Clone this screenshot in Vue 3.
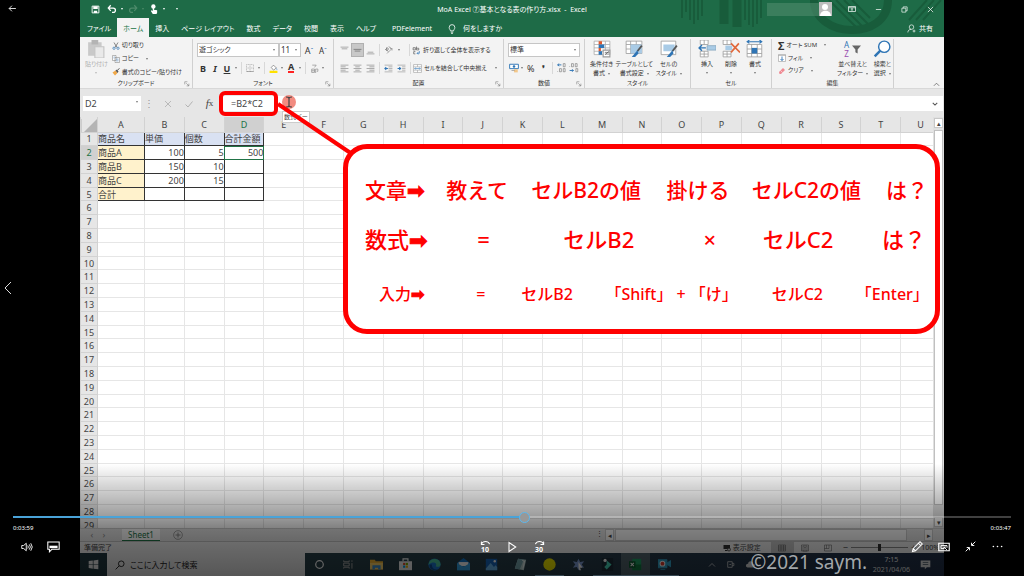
<script setup>
import { ref, h } from 'vue'

const glyphs = {
  save: '<path d="M2 2h12v12H2z" fill="none" stroke="#fff" stroke-width="1.6"/><path d="M4 2h8v5H4zM5 10h6v4H5z" fill="#fff"/>',
  undo: '<path d="M6 2 2 6.500l4 4.500M2.500 6.500H10a3.500 3.500 0 0 1 0 7H8" fill="none" stroke="#fff" stroke-width="2"/>',
  redo: '<path d="m10 2 4 4.500-4 4.500M13.500 6.500H6a3.500 3.500 0 0 0 0 7h2" fill="none" stroke="#4d8a6a" stroke-width="2"/>',
  touch: '<circle cx="7" cy="4" r="3.500" fill="#fff"/><path d="M6 3h2v6l5 1v4l-1 2H6L3 11l1-1 2 1z" fill="#fff"/>',
  ribbonOpt: '<path d="M1 3h14v10H1zM1 5.500h14" fill="none" stroke="#fff" stroke-width="1.400"/><path d="M8 12V7M5.800 9 8 7l2.200 2" fill="none" stroke="#fff" stroke-width="1.300"/>',
  min: '<path d="M2 8h12" stroke="#fff" stroke-width="1.600"/>',
  restore: '<path d="M2 5h9v9H2zM5 5V2h9v9h-3" fill="none" stroke="#fff" stroke-width="1.500"/>',
  close: '<path d="m2 2 12 12M14 2 2 14" stroke="#fff" stroke-width="1.600"/>',
  bulb: '<path d="M5.500 11C5.500 9 3.500 8.500 3.500 5.500a4.500 4.500 0 0 1 9 0c0 3-2 3.500-2 5.500zM6 13h4M6.500 15h3" fill="none" stroke="#fff" stroke-width="1.300"/>',
  share: '<circle cx="8" cy="5.500" r="4" fill="none" stroke="#fff" stroke-width="1.200"/><path d="M1.500 15c0-4 3-5.500 6-5.500M10 12.500h5M12.500 10v5" fill="none" stroke="#fff" stroke-width="1.200"/>',
  paste: '<path d="M1 2h12v12H1z" fill="#c9c9c9"/><path d="M4 0h6v4H4z" fill="#b4b4b4"/><path d="M7 6h8v10H7z" fill="#e9e9e9" stroke="#c4c4c4"/>',
  cut: '<path d="m4 1 6 10M12 1 6 11" stroke="#555" stroke-width="1.400"/><circle cx="4" cy="12.500" r="2.300" fill="none" stroke="#3b7cb8" stroke-width="1.500"/><circle cx="12" cy="12.500" r="2.300" fill="none" stroke="#3b7cb8" stroke-width="1.500"/>',
  copy: '<path d="M1 1h7v10H1zM6 5h9v10H6z" fill="#fff" stroke="#777"/><path d="M8 8h5M8 10h5M8 12h5M3 4h3M3 6h2" stroke="#5b8ab8"/>',
  brush: '<path d="m1 9 6-4 4 5-5 5z" fill="#f0a848"/><path d="m7 5 3-2 3 4-2 3z" fill="#555"/><path d="m11 4 4-3" stroke="#555" stroke-width="2"/>',
  borders: '<path d="M1 1h14v14H1zM8 1v14M1 8h14" fill="none" stroke="#999" stroke-dasharray="2 1"/><path d="M1 15h14" stroke="#777"/>',
  fill: '<path d="m4 6 4-4 5 5-5 4z" fill="#fff" stroke="#555"/><path d="M13 7c2 1 2 3 1 4z" fill="#3b7cb8"/><path d="M1 12h14v4H1z" fill="#ffe100"/>',
  ruby: '<path d="M4 2h7L8 6M3 9h5v6H3zM3 12h5M10 9h4v4h-2M10 9v7" fill="none" stroke="#888" stroke-width="1.200"/>',
  top: '<path d="M1 2h14M3 5h10" stroke="#888" stroke-width="1.200"/>',
  middle: '<path d="M1 6h14M3 9h10" stroke="#666" stroke-width="1.200"/>',
  bottom: '<path d="M3 11h10M1 14h14" stroke="#888" stroke-width="1.200"/>',
  left: '<path d="M1 2h14M1 5h9M1 8h14M1 11h9M1 14h14" stroke="#888" stroke-width="1.200"/>',
  center: '<path d="M1 2h14M4 5h8M1 8h14M4 11h8M1 14h14" stroke="#888" stroke-width="1.200"/>',
  right: '<path d="M1 2h14M6 5h9M1 8h14M6 11h9M1 14h14" stroke="#888" stroke-width="1.200"/>',
  orient: '<path d="M4 15 14 5M10 5h4v4" fill="none" stroke="#888" stroke-width="1.400"/><path d="m1 6 5 5M4 3l3 3-3 3-2-2zM8 1l3 3" fill="none" stroke="#555" stroke-width="1.400"/>',
  outdent: '<path d="M1 2h14M8 5h7M8 8h7M8 11h7M1 14h14" stroke="#999" stroke-width="1.200"/><path d="M7 8H2M4 5.500 1.500 8 4 10.500" stroke="#2f75b5" fill="none" stroke-width="1.800"/>',
  indent: '<path d="M1 2h14M9 5h6M9 8h6M9 11h6M1 14h14" stroke="#999" stroke-width="1.200"/><path d="M1 8h5M4 5.500 6.500 8 4 10.500" stroke="#2f75b5" fill="none" stroke-width="1.800"/>',
  wrap: '<path d="M2 3h4v4H2zM8 1v6h4V4H8M6 10H3v4h3" fill="none" stroke="#555" stroke-width="1.200"/><path d="M13 9v4H9m2-2-2 2 2 2" fill="none" stroke="#2f75b5" stroke-width="1.300"/>',
  merge: '<path d="M1 1h14v14H1zM1 5h14M1 11h14M8 1v4M8 11v4" fill="#fff" stroke="#999"/><path d="M3 8h10M5 6 3 8l2 2M11 6l2 2-2 2" fill="none" stroke="#2f75b5"/>',
  money: '<path d="M1 2h14v7H1z" fill="#fff" stroke="#2f75b5" stroke-width="1.500"/><circle cx="8" cy="5.500" r="2" fill="#2f75b5"/><path d="M8 10h6v5H8z" fill="#f3c78a"/><path d="M4 12h5" stroke="#888"/>',
  dec1: '<path d="M7 3H1M3.500 1 1 3l2.500 2" fill="none" stroke="#2f75b5" stroke-width="1.500"/><path d="M10 1h3v5h-3zM4 9h3v5H4zM10 9h3v5h-3zM1 13v1" fill="none" stroke="#777"/>',
  dec2: '<path d="M4 1h3v5H4zM10 1h3v5h-3zM11 9h3v5h-3zM1 5v1" fill="none" stroke="#777"/><path d="M1 12h6M5 10l2 2-2 2" fill="none" stroke="#2f75b5" stroke-width="1.500"/>',
  cond: '<path d="M1 1h14v12H1zM6 1v12M11 1v12M1 4h14M1 7h14M1 10h14" fill="#fff" stroke="#aaa" stroke-width=".7"/><path d="M5 1h3v3H5zM5 7h2v3H5z" fill="#e0582c"/><path d="M5 4h5v3H5zM5 10h3v3H5z" fill="#2f75b5"/><path d="M9 9h6v6H9z" fill="#fff" stroke="#999"/><path d="m11 13 3-3M10.500 11h4M10.500 12.500h4" stroke="#555" stroke-width=".6"/>',
  tableFmt: '<path d="M1 1h14v11H1zM1 4h14M1 8h14M5 1v11M10 1v11" fill="#fff" stroke="#999" stroke-width=".7"/><path d="M5 4h10v8H5z" fill="#a9cbe6"/><path d="m15 5-4 5" stroke="#555" stroke-width="1.600"/><path d="m11 9 1 3-3 3H6z" fill="#2f75b5"/>',
  cellFmt: '<path d="M1 1h13v12H1z" fill="#fff" stroke="#999" stroke-width=".7"/><path d="M3 4h10v6H3z" fill="#a9cbe6"/><path d="m15 5-4 5" stroke="#555" stroke-width="1.600"/><path d="m11 9 1 3-3 3H6z" fill="#2f75b5"/>',
  ins: '<path d="M2 0h7v4H2zM2 10h7v5H2zM5.500 0v4M5.500 10v5M2 12.500h7" fill="#fff" stroke="#999" stroke-width=".7"/><path d="M8 5h8v4H8z" fill="#a9cbe6" stroke="#7f9fb8" stroke-width=".6"/><path d="M7 7H1M3.500 4.500 1 7l2.500 2.500" fill="none" stroke="#2f75b5" stroke-width="1.300"/>',
  del: '<path d="M1 0h7v4H1zM1 10h7v5H1zM4.500 0v4M4.500 10v5M1 12.500h7" fill="#fff" stroke="#999" stroke-width=".7"/><path d="M3 5h6v4H3z" fill="#a9cbe6"/><path d="m8 3 8 8M15 3l-7 8" stroke="#e0693c" stroke-width="1.500"/>',
  fmt: '<path d="M1 4h13v11H1zM5 4v11M10 4v11M1 8h13M1 12h13" fill="#fff" stroke="#999" stroke-width=".7"/><path d="M5 7h5v5H5z" fill="#2f75b5"/><path d="M1 1.500h13M3 0 1 1.500 3 3M12 0l2 1.500L12 3" fill="none" stroke="#2f75b5"/>',
  fillDown: '<path d="M1 1h14v14H1z" fill="#fff" stroke="#888"/><path d="M1 3h14" stroke="#888"/><path d="M8 5v8M5 10l3 3 3-3" fill="none" stroke="#2f75b5" stroke-width="1.800"/>',
  eraser: '<path d="m2 10 8-8 4 4-8 8H3z" fill="#ef8a93"/><path d="m5 7 4 4" stroke="#fff"/>',
  funnel: '<path d="M0 1h16L10 8v7l-4-2V8z" fill="#666"/>',
  find: '<circle cx="10" cy="6" r="5" fill="#fff" stroke="#2f75b5" stroke-width="1.300"/><path d="m6.500 9.500-5 5" stroke="#2f75b5" stroke-width="2.200"/>',
  launch: '<path d="M2 9V2h7" fill="none" stroke="#777" stroke-width="1.500"/><path d="m6 6 7 7M13 7v6H7" fill="none" stroke="#777" stroke-width="1.500"/>',
  up: '<path d="m2 11 6-6 6 6" fill="none" stroke="#555" stroke-width="1.600"/>',
  down: '<path d="m2 5 6 6 6-6" fill="none" stroke="#555" stroke-width="2.800"/>',
  cancel: '<path d="m2 2 12 12M14 2 2 14" stroke="#b3b3b3" stroke-width="1.800"/>',
  check: '<path d="m1 9 5 5L15 3" fill="none" stroke="#b3b3b3" stroke-width="2"/>',
  plus: '<circle cx="8" cy="8" r="7" fill="none" stroke="#777"/><path d="M8 4v8M4 8h8" stroke="#777" stroke-width="1.300"/>',
  display: '<path d="M1 2h13v8H1z" fill="#333"/><path d="M4 13h5" stroke="#333" stroke-width="2"/><circle cx="12" cy="11" r="3" fill="#ddd" stroke="#333" stroke-width="1.500"/>',
  grid: '<path d="M1 2h14v12H1zM1 6h14M1 10h14M6 2v12M11 2v12" fill="none" stroke="#555"/>',
  page: '<path d="M1 2h14v12H1zM4 4h8v10H4zM6 7h4M6 10h4" fill="none" stroke="#555"/>',
  breaks: '<path d="M1 2h14v12H1zM1 9h9V2M5 2v7" fill="none" stroke="#555"/>',
  win: '<path d="M1 3 7 2v5.500H1zM8 2l7-1v6.500H8zM1 8.500h6V14l-6-1zM8 8.500h7V15l-7-1z" fill="#eee"/>',
  search: '<circle cx="10" cy="6" r="4.500" fill="none" stroke="#222" stroke-width="1.500"/><path d="m7 9-6 6" stroke="#222" stroke-width="1.500"/>',
  cortana: '<circle cx="8" cy="8" r="5.500" fill="none" stroke="#fff" stroke-width="1.800"/>',
  tasks: '<path d="M1 2v2h8V2M1 6h8v4H1zM1 14v-2h8v2M13 2v2M13 6v8" fill="none" stroke="#aaa" stroke-width="1.400"/>',
  folder: '<path d="M0 2h6l1 2h9v10H0z" fill="#f2b632"/><path d="M0 6h16v8H0z" fill="#ffd66b"/><path d="M3 9h10v5h-3v-2H6v2H3z" fill="#3b92d4"/>',
  store: '<path d="M0 4h16v11H0z" fill="#f4f4f4"/><path d="M5 4V1h6v3" fill="none" stroke="#f4f4f4" stroke-width="1.500"/><path d="M5 6h2.700v2.700H5z" fill="#e8502c"/><path d="M8.300 6H11v2.700H8.300z" fill="#7fba00"/><path d="M5 9.300h2.700V12H5z" fill="#00a4ef"/><path d="M8.300 9.300H11V12H8.300z" fill="#ffb900"/>',
  edge: '<circle cx="8" cy="8" r="7.500" fill="#1c78d0"/><path d="M1 6a7.500 7.500 0 0 1 14.500 2c0 3-4 3.500-6 2 2-3-1-5-4-4.500C3 6 1 8 .600 9z" fill="#4cc8a0"/><path d="M5 8c-1 4 3 7 7 6-6 3-11-1-10-6z" fill="#0c4a90"/>',
  mail: '<path d="M0 6 8 0l8 6v9H0z" fill="#1276c8"/><path d="M2 5h12v5H2z" fill="#fff"/><path d="m0 6 8 5 8-5v9H0z" fill="#35a6e8"/>',
  photos: '<path d="M1 1h14v14H1z" fill="#1766bd"/><path d="m1 13 6-7 4 5 2-2 2 2v4H1z" fill="#6ab8f0"/><circle cx="12" cy="4" r="1.500" fill="#fff"/>',
  notes: '<path d="m5 1 10 1-3 13-11-2z" fill="#b9d4d2"/><path d="m5 1 7 1-5 12-6-1z" fill="#77a7b0"/><path d="m10 3 3 1-2 9" fill="none" stroke="#fff"/>',
  yellow: '<circle cx="8" cy="8" r="7.600" fill="#f2ea00"/>',
  star: '<path d="m8 1 2 4 5-1-3 4 3 4-5-1-2 4-2-4-5 1 3-4-3-4 5 1z" fill="#7f9ed8"/><path d="m8 5 5 7-3 0 1 3-2 0-1-3z" fill="#fff"/>',
  filmora: '<path d="M1 0h14v16H1z" fill="#1c2c38"/><path d="m7 3 6 5-6 6-3-3 3-3z" fill="#4adcc0"/><circle cx="5" cy="3" r="2" fill="#fff"/>',
  excel: '<path d="M4 1h11v14H4z" fill="#21a366"/><path d="M9 8h6v7H4V8z" fill="#107c41"/><path d="M0 4h8v8H0z" fill="#0b5c30"/><path d="m2 6 4 4M6 6l-4 4" stroke="#fff" stroke-width="1.300"/>',
  recorder: '<path d="M0 2h11v10H0zM11 6l5-3v8l-5-3zM3 14h6" fill="#35a7cf" stroke="#35a7cf"/><circle cx="5.500" cy="7" r="3.500" fill="#fff"/><circle cx="5.500" cy="7" r="2.300" fill="#e23b2c"/>',
  trayUp: '<path d="m2 11 6-6 6 6" fill="none" stroke="#ddd" stroke-width="1.500"/>',
  usb: '<path d="M3 3h8v10H3zM11 6h3v4h-3M6 8h3" fill="none" stroke="#ddd" stroke-width="1.300"/>',
  cloud: '<path d="M4 12h9a3 3 0 0 0 0-6A4 4 0 0 0 5 6a3 3 0 0 0-1 6z" fill="#ddd"/>',
  notice: '<path d="M1 2h14v10h-5l-3 3v-3H1z" fill="#ddd"/><path d="M4 5h8M4 8h8" stroke="#345"/>',
  back: '<path d="M14 8H2M7 3 2 8l5 5" fill="none" stroke="#eee" stroke-width="1.600"/>',
  prev: '<path d="m11 2-6 6 6 6" fill="none" stroke="#ddd" stroke-width="1"/>',
  volume: '<path d="M1 6h2.500L7 3v10L3.500 10H1zM9 6q1.500 2 0 4M11 4.500q3 3.500 0 7M13 3q4 5 0 10" fill="none" stroke="#fff" stroke-width="1.200"/>',
  caption: '<path d="M1 2.500h14v9H6l-3 3v-3H1z" fill="none" stroke="#fff" stroke-width="1.300"/><path d="M3 7h10v3H3z" fill="#fff"/>',
  skipBack: '<path d="M2 6C4 1 12 1 14 6M2 2v4.500h4.500" fill="none" stroke="#fff" stroke-width="1.500"/>',
  skipFwd: '<path d="M14 6C12 1 4 1 2 6M14 2v4.500H9.500" fill="none" stroke="#fff" stroke-width="1.500"/>',
  play: '<path d="M4 2v12l9-6z" fill="none" stroke="#fff" stroke-width="1.400"/>',
  pencil: '<path d="m2 14 1-4 9-9 3 3-9 9zM3 10l3 3M10 3l3 3" fill="none" stroke="#fff" stroke-width="1.400"/>',
  cast: '<path d="M1 3h14v10H1z" fill="none" stroke="#fff" stroke-width="1.500"/><path d="M4 6h8v3M4 6v4h4M12 12 8 8m0 3V8h3" fill="none" stroke="#fff" stroke-width="1.200"/>',
  shrink: '<path d="m15 1-5 5M9.500 2.500v4h4M1 15l5-5M2.500 9.500h4v4" fill="none" stroke="#fff" stroke-width="1.400"/>',
  more: '<circle cx="2" cy="8" r="1.200" fill="#fff"/><circle cx="8" cy="8" r="1.200" fill="#fff"/><circle cx="14" cy="8" r="1.200" fill="#fff"/>'
}
const Ico = (p) => h('svg', { viewBox: '0 0 16 16', width: p.s, height: p.s, 'aria-hidden': 'true', innerHTML: glyphs[p.n] })
Ico.props = ['n', 's']

const tabs = ['ファイル', 'ホーム', '挿入', 'ページ レイアウト', '数式', 'データ', '校閲', '表示', 'ヘルプ', 'PDFelement']
const columns = 'ABCDEFGHIJKLMNOPQRSTU'.split('')
const data = [
  ['商品名', '単価', '個数', '合計金額'],
  ['商品A', 100, 5, 500],
  ['商品B', 150, 10, ''],
  ['商品C', 200, 15, ''],
  ['合計', '', '', '']
]
const cellClass = (r, c) => ({
  framed: r <= 5 && c < 4,
  title: r === 1 && c < 4,
  label: r > 1 && r <= 5 && c === 0,
  num: r > 1 && c > 0,
  active: r === 2 && c === 3
})
const styleBtns = [['cond', '条件付き', '書式'], ['tableFmt', 'テーブルとして', '書式設定'], ['cellFmt', 'セルの', 'スタイル']]
const cellBtns = [['ins', '挿入'], ['del', '削除'], ['fmt', '書式']]
const apps = ['cortana', 'tasks', 'folder', 'store', 'edge', 'mail', 'photos', 'notes', 'yellow', 'star', 'filmora', 'excel', 'recorder']
const running = ['yellow', 'filmora', 'excel', 'recorder']

const duration = 466
const position = ref(239)
const zoom = ref(50)
const formula = ref('=B2*C2')
</script>

<template>
  <div class="player">
    <main class="video" lang="ja">
      <header class="top">
        <svg class="deco" viewBox="0 0 280 37" aria-hidden="true">
          <g fill="none" stroke="#185c3b" stroke-width="2">
            <path d="M18 0v18M22 0v12M26 0v20M30 0v24M34 0v20M38 0v16M81 0v20M85 0v25M89 0v27M93 0v24M97 0v18" />
            <path d="M60 0v24M73 0v27" stroke-width="9" />
            <path d="m165 0 30 30M172 0l28 28M180 0l24 24M188 0l18 18M245 20l18-20M252 20l18-20M259 20l18-20" />
            <path d="M150 0c0 38 74 42 74 0" stroke-width="8" />
          </g>
        </svg>
        <div class="titlebar">
          <div class="quick">
            <button aria-label="上書き保存"><Ico n="save" s="9" /></button>
            <button aria-label="元に戻す"><Ico n="undo" s="10" /></button><i class="caret"></i>
            <button aria-label="やり直し"><Ico n="redo" s="10" /></button><i class="caret dim"></i>
            <button aria-label="タッチ"><Ico n="touch" s="10" /></button><i class="caret"></i>
            <i class="caret last"></i>
          </div>
          <h1>MoA Excel ⑦基本となる表の作り方.xlsx&nbsp; -&nbsp; Excel</h1>
          <div class="window">
            <span class="account"></span>
            <svg class="avatar" viewBox="0 0 13 14" width="13" height="14" aria-hidden="true"><path d="M0 0h13v14H0z" fill="#bdbdbd" /><circle cx="6" cy="5" r="3" fill="#fff" /><path d="M1 14c0-7 11-7 11 0z" fill="#fff" /></svg>
            <button aria-label="リボンの表示"><Ico n="ribbonOpt" s="8" /></button>
            <button aria-label="最小化"><Ico n="min" s="7" /></button>
            <button aria-label="元のサイズ"><Ico n="restore" s="7" /></button>
            <button aria-label="閉じる"><Ico n="close" s="7" /></button>
          </div>
        </div>
        <nav class="tabs">
          <button v-for="t in tabs" :key="t" :class="{ on: t === 'ホーム' }">{{ t }}</button>
          <button class="tell"><Ico n="bulb" s="10" />何をしますか</button>
          <button class="share"><Ico n="share" s="9" />共有</button>
        </nav>
      </header>

      <section class="ribbon">
        <div class="group">
          <div class="body clip">
            <button class="big off"><Ico n="paste" s="18" /><span>貼り付け</span><i class="caret"></i></button>
            <div class="stack">
              <button><Ico n="cut" s="8" />切り取り</button>
              <button><Ico n="copy" s="8" />コピー<i class="caret"></i></button>
              <button><Ico n="brush" s="8" />書式のコピー/貼り付け</button>
            </div>
          </div>
          <footer>クリップボード<Ico class="launch" n="launch" s="6" /></footer>
        </div>

        <div class="group">
          <div class="body lines">
            <div class="line">
              <span class="combo wide"><select aria-label="フォント"><option>遊ゴシック</option></select></span>
              <span class="combo size"><select aria-label="サイズ"><option>11</option></select></span>
              <button class="tool grow">A<sup>ˆ</sup></button>
              <button class="tool shrinkA">A<sup>ˇ</sup></button>
            </div>
            <div class="line font">
              <button class="tool"><b>B</b></button>
              <button class="tool"><b><em>I</em></b></button>
              <button class="tool"><b><u>U</u></b></button><i class="caret"></i><hr />
              <button class="tool" aria-label="罫線"><Ico n="borders" s="8" /></button><i class="caret"></i><hr />
              <button class="tool" aria-label="塗りつぶし"><Ico n="fill" s="9" /></button><i class="caret"></i>
              <button class="tool"><b class="red">A</b></button><i class="caret"></i><hr />
              <button class="tool" aria-label="ふりがな"><Ico n="ruby" s="9" /></button><i class="caret"></i>
            </div>
          </div>
          <footer>フォント<Ico class="launch" n="launch" s="6" /></footer>
        </div>

        <div class="group">
          <div class="body lines align">
            <div class="line">
              <button class="tool" aria-label="上揃え"><Ico n="top" s="9" /></button>
              <button class="tool pressed" aria-label="上下中央揃え"><Ico n="middle" s="9" /></button>
              <button class="tool" aria-label="下揃え"><Ico n="bottom" s="9" /></button><hr />
              <button class="tool" aria-label="方向"><Ico n="orient" s="8" /></button><i class="caret orient"></i><hr />
              <button class="text"><Ico n="wrap" s="9" />折り返して全体を表示する</button>
            </div>
            <div class="line">
              <button class="tool" aria-label="左揃え"><Ico n="left" s="9" /></button>
              <button class="tool" aria-label="中央揃え"><Ico n="center" s="9" /></button>
              <button class="tool" aria-label="右揃え"><Ico n="right" s="9" /></button><hr />
              <button class="tool" aria-label="インデントを減らす"><Ico n="outdent" s="9" /></button>
              <button class="tool" aria-label="インデントを増やす"><Ico n="indent" s="9" /></button><hr />
              <button class="text"><Ico n="merge" s="9" />セルを結合して中央揃え<i class="caret"></i></button>
            </div>
          </div>
          <footer>配置<Ico class="launch" n="launch" s="6" /></footer>
        </div>

        <div class="group">
          <div class="body lines">
            <div class="line"><span class="combo full"><select aria-label="表示形式"><option>標準</option></select></span></div>
            <div class="line">
              <button class="tool" aria-label="通貨"><Ico n="money" s="10" /></button><i class="caret"></i>
              <button class="tool pctBtn">%</button>
              <button class="tool"><b>❜</b></button><hr />
              <button class="tool" aria-label="小数点以下を増やす"><Ico n="dec1" s="10" /></button>
              <button class="tool" aria-label="小数点以下を減らす"><Ico n="dec2" s="10" /></button>
            </div>
          </div>
          <footer>数値<Ico class="launch" n="launch" s="6" /></footer>
        </div>

        <div class="group">
          <div class="body styles">
            <button v-for="b in styleBtns" :key="b[0]" class="big"><Ico :n="b[0]" s="18" /><span>{{ b[1] }}</span><span>{{ b[2] }}<i class="caret"></i></span></button>
          </div>
          <footer>スタイル</footer>
        </div>

        <div class="group">
          <div class="body cells">
            <button v-for="b in cellBtns" :key="b[0]" class="big"><Ico :n="b[0]" s="18" /><span>{{ b[1] }}</span><i class="caret"></i></button>
          </div>
          <footer>セル</footer>
        </div>

        <div class="group">
          <div class="body edit">
            <div class="stack">
              <button><b class="sigma">Σ</b>オート SUM<i class="caret"></i></button>
              <button><Ico n="fillDown" s="8" />フィル<i class="caret"></i></button>
              <button><Ico n="eraser" s="8" />クリア<i class="caret"></i></button>
            </div>
            <button class="big"><span class="sort"><span class="az"><span>A</span><span>Z</span></span><Ico n="funnel" s="9" /></span><span>並べ替えと</span><span>フィルター<i class="caret"></i></span></button>
            <button class="big"><Ico n="find" s="18" /><span>検索と</span><span>選択<i class="caret"></i></span></button>
          </div>
          <footer>編集</footer>
        </div>
        <div class="group end"><button aria-label="リボンを折りたたむ"><Ico n="up" s="7" /></button></div>
      </section>

      <section class="formula">
        <span class="combo name"><select aria-label="名前ボックス"><option>D2</option></select></span>
        <span class="dots">⋮</span>
        <button aria-label="キャンセル"><Ico n="cancel" s="8" /></button>
        <button aria-label="入力"><Ico n="check" s="8" /></button>
        <button class="fx"><em>f</em>x</button>
        <label class="entry"><input v-model="formula" aria-label="数式バー" /><Ico n="down" s="6" /></label>
      </section>

      <section class="sheet">
        <div class="cellsArea">
          <table>
            <colgroup><col class="rowNo" /><col class="first" /><col v-for="n in 20" :key="n" /></colgroup>
            <thead>
              <tr><th class="corner"></th><th v-for="c in columns" :key="c" :class="{ sel: c === 'D' }">{{ c }}</th></tr>
            </thead>
            <tbody>
              <tr v-for="r in 29" :key="r">
                <th :class="{ sel: r === 2 }">{{ r }}</th>
                <td v-for="(c, i) in columns" :key="c" :class="cellClass(r, i)">{{ data[r - 1]?.[i] }}</td>
              </tr>
            </tbody>
          </table>
        </div>
        <div class="vscroll"><button aria-label="上へ">▴</button><i></i><button aria-label="下へ">▾</button></div>
      </section>

      <section class="sheetTabs">
        <span class="navs"><span>‹</span><span>›</span></span>
        <button class="tab">Sheet1</button>
        <button aria-label="新しいシート"><Ico n="plus" s="10" /></button>
        <div class="hscroll"><span>⋮</span><button aria-label="左へ">◂</button><i></i><button aria-label="右へ">▸</button></div>
      </section>

      <section class="status">
        <span>準備完了</span>
        <button class="disp"><Ico n="display" s="8" />表示設定</button>
        <button class="view on" aria-label="標準"><Ico n="grid" s="8" /></button>
        <button class="view" aria-label="ページ レイアウト"><Ico n="page" s="8" /></button>
        <button class="view" aria-label="改ページ"><Ico n="breaks" s="8" /></button>
        <span class="zoom">−<input v-model="zoom" type="range" aria-label="ズーム" />+</span>
        <span class="pct">100%</span>
      </section>

      <section class="taskbar">
        <button class="start" aria-label="スタート"><Ico n="win" s="11" /></button>
        <label class="find"><Ico n="search" s="10" /><input placeholder="ここに入力して検索" aria-label="検索" /></label>
        <div class="apps"><button v-for="a in apps" :key="a" :class="{ run: running.includes(a), front: a === 'excel' }" :aria-label="a"><Ico :n="a" :s="a === 'cortana' || a === 'tasks' ? 11 : 13" /></button></div>
        <div class="tray">
          <Ico n="trayUp" s="8" /><Ico n="usb" s="9" /><Ico n="cloud" s="10" />
          <time><span>7:15</span><span>2021/04/06</span></time>
          <Ico n="notice" s="11" />
        </div>
      </section>

      <div class="tooltip">数式バー</div>
      <div class="pointer"><svg viewBox="0 0 14 14" width="14" height="14" aria-hidden="true"><path d="M4 2q3 0 3 1.500Q7 2 10 2M7 3v8M4 12q3 0 3-1.500Q7 12 10 12" fill="none" stroke="#444" stroke-width="1.200" /></svg></div>
      <svg class="leader" viewBox="0 0 80 60" width="80" height="60" aria-hidden="true"><path d="M4 5 78 55" stroke="#f00" stroke-width="4" /></svg>
      <div class="ring"></div>
      <div class="callout">
        <p class="say"><span>文章<i>➡</i></span><span>教えて</span><span>セルB2の値</span><span>掛ける</span><span>セルC2の値</span><span>は？</span></p>
        <p class="expr"><span>数式<i>➡</i></span><span>=</span><span>セルB2</span><span>×</span><span>セルC2</span><span>は？</span></p>
        <p class="keys"><span>入力<i>➡</i></span><span>=</span><span>セルB2</span><span>「Shift」 + 「け」</span><span>セルC2</span><span>「Enter」</span></p>
      </div>
      <div class="shade"></div>
      <div class="mark">©2021 saym.</div>
    </main>

    <button class="backBtn" aria-label="戻る"><Ico n="back" s="9" /></button>
    <button class="prevBtn" aria-label="前へ"><Ico n="prev" s="16" /></button>
    <div class="controls">
      <input v-model="position" class="seek" type="range" min="0" :max="duration" aria-label="再生位置" :style="{ '--played': (position / duration) * 100 + '%' }" />
      <div class="times"><span>0:03:59</span><span>0:03:47</span></div>
      <div class="buttons">
        <div><button aria-label="音量"><Ico n="volume" s="12" /></button><button aria-label="字幕"><Ico n="caption" s="13" /></button></div>
        <div>
          <button class="skip" aria-label="10秒戻る"><Ico n="skipBack" s="11" /><span>10</span></button>
          <button aria-label="再生"><Ico n="play" s="12" /></button>
          <button class="skip" aria-label="30秒進む"><Ico n="skipFwd" s="11" /><span>30</span></button>
        </div>
        <div><button aria-label="編集"><Ico n="pencil" s="12" /></button><button aria-label="キャスト"><Ico n="cast" s="12" /></button><button aria-label="全画面の終了"><Ico n="shrink" s="11" /></button><button aria-label="その他"><Ico n="more" s="11" /></button></div>
      </div>
    </div>
  </div>
</template>

<style>
html, body { background: #000; overflow: hidden; }
</style>

<style scoped>
* { box-sizing: border-box; }
.player { position: relative; height: 100vh; padding: 0 80px; background: #000; font-family: "Noto Sans", "Noto Sans CJK JP", sans-serif; font-size: 7px; line-height: 9px; color: #444; }
.video { position: relative; display: flex; flex-direction: column; height: 100%; background: #e6e6e6; font-feature-settings: "palt"; overflow: hidden; }
button { display: inline-flex; align-items: center; justify-content: center; padding: 0; border: 0; background: none; font: inherit; font-feature-settings: inherit; color: inherit; white-space: nowrap; }
svg { display: block; flex: none; }
select, input { min-width: 0; margin: 0; padding: 0; border: 0; outline: 0; border-radius: 0; background: none; font: inherit; color: inherit; appearance: none; }
.caret { flex: none; border: 1px solid transparent; border-top: 2px solid #777; border-bottom: 0; }

.top { position: relative; background: #1e6b47; color: #fff; }
.deco { position: absolute; top: 0; right: 0; width: 280px; height: 37px; }
.titlebar { position: relative; display: grid; grid-template-columns: 1fr auto 1fr; align-items: center; height: 18px; }
.titlebar h1 { margin: 0; font-size: 7px; font-weight: 400; }
.titlebar .caret { border-top-color: #fff; }
.titlebar .dim { border-top-color: #4d8a6a; }
.quick { display: flex; align-items: center; gap: 4px; padding-left: 11px; }
.quick button:nth-child(2) { margin-left: 3px; }
.quick .caret { margin: 0 1px 0 0; }
.quick .last { margin-left: 6px; }
.window { display: flex; align-items: center; justify-content: flex-end; padding-right: 1px; }
.window button { width: 26px; height: 18px; }
.account { width: 52px; height: 13px; background: #4f8b6d; opacity: .6; }
.avatar { margin-right: 7px; }
.tabs { position: relative; display: flex; height: 19px; }
.tabs button { padding: 2px 6px 0; }
.tabs button:first-child { padding-left: 7px; }
.tabs .on { background: #f3f3f3; color: #217346; }
.tabs button:nth-child(10) { padding-left: 10px; }
.tabs .tell { gap: 6px; padding-left: 9px; }
.tabs .share { gap: 3px; margin-left: auto; padding-right: 11px; }

.ribbon { display: grid; grid-template-columns: 113fr 141fr 170fr 81fr 106fr 81fr 122fr 50fr; height: 52px; background: #f3f3f3; border-bottom: 1px solid #d8d8d8; font-size: 6px; color: #333; }
.group { display: flex; flex-direction: column; min-width: 0; margin: 2px 0 1px; border-right: 1px solid #d0d0d0; }
.group footer { position: relative; display: flex; justify-content: center; height: 9px; line-height: 9px; }
.launch { position: absolute; right: 2px; bottom: 1px; }
.body { display: flex; flex: 1; min-width: 0; }
.end { border: 0; justify-content: flex-end; align-items: flex-end; padding-right: 4px; }
.big { flex-direction: column; justify-content: flex-start; gap: 0; padding-top: 1px; }
.big > svg, .big > .sort { margin-bottom: 2px; }
.big > span { display: flex; align-items: center; gap: 3px; line-height: 9px; }
.big > .caret { margin-top: 3px; }
.off { color: #b0b0b0; }
.off .caret { border-top-color: #bbb; }
.stack { display: flex; flex-direction: column; height: 40px; }
.stack button { flex: 1; justify-content: flex-start; gap: 2px; }
.stack .caret { margin-left: 5px; }
.clip { padding-left: 5px; gap: 4px; }
.lines { flex-direction: column; padding: 4px 4px 0; gap: 4px; }
.line { display: flex; align-items: center; height: 14px; }
.line hr { width: 1px; height: 12px; margin: 0 3px; border: 0; background: #d8d8d8; }
.line .caret { margin: 0 1px; }
.tool { width: 12px; height: 14px; font-size: 9px; }
.combo { position: relative; display: flex; height: 14px; background: #fff; border: 1px solid #c6c6c6; }
.combo select { width: 100%; padding-left: 1px; font-size: 7px; line-height: 12px; }
.combo::after { content: ""; position: absolute; right: 3px; top: 5px; border: 1px solid transparent; border-top: 2px solid #777; border-bottom: 0; }
.wide { flex: 1; }
.size { width: 22px; }
.size select { font-size: 8px; }
.grow { width: 16px; font-size: 9px; }
.full { flex: 1; }
.shrinkA { width: 12px; font-size: 8px; }
.tool sup { font-size: 7px; line-height: 7px; color: #2f75b5; }
.font hr { margin: 0 2px; }
.line.font .caret { margin: 0 2px; }
.red { border-bottom: 2px solid #f22; line-height: 8px; }
.align .line hr { margin: 0 2px; }
.align .tool { width: 13px; }
.pctBtn { width: 14px; }
.pressed { background: #c8c8c8; outline: 1px solid #b0b0b0; outline-offset: -1px; }
.line .caret.orient { margin: 0 7px 0 3px; }
.text { gap: 2px; }
.text .caret { margin-left: 6px; }
.styles { justify-content: space-between; padding: 0 8px 0 5px; }
.cells { justify-content: space-around; padding: 0 4px; }
.edit { padding-left: 6px; gap: 5px; }
.edit .stack { width: 54px; height: 38px; }
.sigma { font-size: 11px; }
.big > .sort { height: 18px; }
.az { display: flex; flex-direction: column; font-size: 8px; line-height: 9px; color: #2f75b5; }
.az span:last-child { color: #9b4fb0; }

.formula { display: flex; align-items: stretch; height: 15px; margin: 7px 1px 6px 3px; }
.formula .combo { border: 0; height: 15px; }
.name { width: 58px; }
.combo.name select { padding-left: 2px; font-size: 9px; }
.dots { width: 16px; text-align: center; font-size: 10px; line-height: 15px; color: #999; }
.formula button { width: 21px; }
.fx { font-family: "Liberation Serif", serif; font-size: 9px; }
.fx em { font-size: 11px; }
.entry { display: flex; flex: 1; align-items: center; padding: 0 5px 0 11px; background: #fff; font-size: 9px; }
.entry input { flex: 1; }

.sheet { display: flex; flex: 1; min-height: 0; }
.cellsArea { flex: 1; min-width: 0; overflow: hidden; background: #fff; }
table { width: calc(100% + 8px); height: 416px; table-layout: fixed; border-collapse: collapse; font-size: 9px; line-height: 11px; font-feature-settings: normal; }
.rowNo { width: 17px; }
.first { width: 47px; }
th, td { height: 13px; padding: 0; border: 1px solid #e6e6e6; white-space: nowrap; overflow: hidden; }
th { background: #e6e6e6; font-weight: 400; text-align: center; border-color: #d2d2d2; color: #444; }
thead th { height: 15px; border-top: 0; }
.corner { background: linear-gradient(135deg, #e6e6e6 55%, #b4b4b4 55%); }
.sel { background: #d0d0d0; color: #217346; }
.framed { border-color: #333; }
.title { background: #d9e1f2; }
.label { background: #fff2cc; }
.num { text-align: right; }
.active { outline: 1px solid #217346; outline-offset: -1px; }
.vscroll { display: flex; flex-direction: column; width: 11px; background: #e0e0e0; }
.vscroll button { height: 10px; margin: 1px; background: #fff; border: 1px solid #c8c8c8; font-size: 7px; line-height: 7px; }
.vscroll i { flex: 1; margin: 1px 1px 11px; background: #fff; border: 1px solid #c0c0c0; }

.sheetTabs { display: flex; height: 13px; align-items: stretch; border-top: 1px solid #ccc; }
.navs { display: flex; justify-content: space-around; width: 36px; padding: 0 6px; font-size: 9px; line-height: 11px; color: #888; }
.tab { width: 38px; margin-left: 6px; margin-right: 13px; background: #fff; border-bottom: 1px solid #217346; color: #217346; font-size: 8px; }
.hscroll { display: flex; width: 39%; margin-left: auto; margin-right: 11px; }
.hscroll span { width: 9px; }
.hscroll button { width: 9px; background: #fff; border: 1px solid #ccc; font-size: 7px; }
.hscroll i { flex: 1; margin: 0 17px 0 1px; background: #fff; border: 1px solid #ccc; }
.status { display: flex; align-items: center; height: 12px; padding: 0 5px 0 4px; border-top: 1px solid #c4c4c4; background: #f0f0f0; }
.disp { gap: 2px; margin: 0 10px 0 auto; }
.view { width: 23px; height: 11px; }
.view.on { background: #c8c8c8; }
.zoom { display: flex; align-items: center; gap: 3px; margin-left: 3px; font-size: 9px; }
.zoom input { width: 57px; height: 10px; background: linear-gradient(#888, #888) center / 100% 1px no-repeat; }
.zoom input::-webkit-slider-thumb { appearance: none; width: 3px; height: 7px; background: #333; }
.pct { margin-left: 5px; }

.taskbar { display: grid; grid-template-columns: 27px 198px 374px 1fr; height: 23px; background: linear-gradient(90deg, #284049 40%, #223049); color: #eee; }
.start { background: #203840; }
.find { display: flex; align-items: center; gap: 5px; padding-left: 8px; background: #f0f0f0; color: #222; font-size: 8px; }
.find input { flex: 1; }
.find input::placeholder { color: #222; opacity: 1; }
.apps { display: flex; }
.apps button { flex: 1; border-bottom: 1px solid transparent; }
.apps .run { border-bottom-color: #9ccbe8; }
.apps .front { background: #52656d; }
.tray { display: flex; align-items: center; justify-content: flex-end; gap: 10px; padding-right: 13px; }
.tray > svg:nth-of-type(3) { margin-right: auto; }
.tray > svg:first-child { margin-left: 29px; }
.tray time { display: flex; flex-direction: column; align-items: center; line-height: 10px; }

.tooltip { position: absolute; left: 202px; top: 111px; padding: 0 1px; background: #fff; border: 1px solid #ccc; font-size: 6px; line-height: 10px; }
.pointer { position: absolute; left: 202px; top: 95px; border-radius: 50%; background: #f28b80; }
.leader { position: absolute; left: 194px; top: 99px; }
.ring { position: absolute; left: 139px; top: 91px; width: 59px; height: 25px; border: 4px solid #f00; border-radius: 6px; }
.callout { position: absolute; left: 263px; right: 4px; top: 144px; display: flex; flex-direction: column; padding: 29px 0 24px 17px; border: 5px solid #f00; border-radius: 24px; background: #fff; color: #f00; font-feature-settings: normal; font-weight: 500; text-spacing-trim: space-all; }
.callout p { display: grid; margin: 0; white-space: nowrap; }
.callout i { font-family: "DejaVu Sans", sans-serif; font-style: normal; -webkit-text-stroke: 1px #f00; }
.say { grid-template-columns: 81fr 85fr 135fr 85fr 134fr 49fr; font-size: 21px; line-height: 24px; }
.expr { grid-template-columns: 112fr 86fr 140fr 59fr 119fr 53fr; font-size: 22px; line-height: 26px; padding-top: 23px; }
.keys { grid-template-columns: 97fr 45fr 84fr 166fr 84fr 79fr; font-size: 16px; line-height: 20px; padding: 30px 0 0 14px; }
.shade { position: absolute; inset: auto 0 0; height: 112px; background: linear-gradient(rgba(0,0,0,0), rgba(0,0,0,.2) 24%, rgba(0,0,0,.38) 46%, rgba(0,0,0,.5) 58%, rgba(0,0,0,.56) 72%, rgba(0,0,0,.64)); }
.mark { position: absolute; right: 77px; bottom: 4px; font-size: 19px; line-height: 19px; color: #a3a7aa; }

.backBtn { position: absolute; left: 8px; top: 4px; }
.prevBtn { position: absolute; left: 0; top: 50%; margin-top: -8px; }
.controls { position: absolute; inset: auto 13px 16px; display: flex; flex-direction: column; color: #fff; }
.seek { width: 100%; height: 12px; background: linear-gradient(90deg, #4aa3d8 var(--played), rgba(255,255,255,.25) var(--played)) center / 100% 2px no-repeat; }
.seek::-webkit-slider-thumb { appearance: none; width: 11px; height: 11px; border: 1px solid #5bb8ee; border-radius: 50%; background: #989898; }
.times { display: flex; justify-content: space-between; font-size: 6px; line-height: 10px; }
.buttons { display: grid; grid-template-columns: 1fr auto 1fr; height: 27px; }
.buttons div { display: flex; }
.buttons div:last-child { justify-content: flex-end; }
.buttons button { width: 27px; }
.skip { flex-direction: column; font-weight: 700; line-height: 7px; }
.skip svg { margin-bottom: -5px; }
</style>
